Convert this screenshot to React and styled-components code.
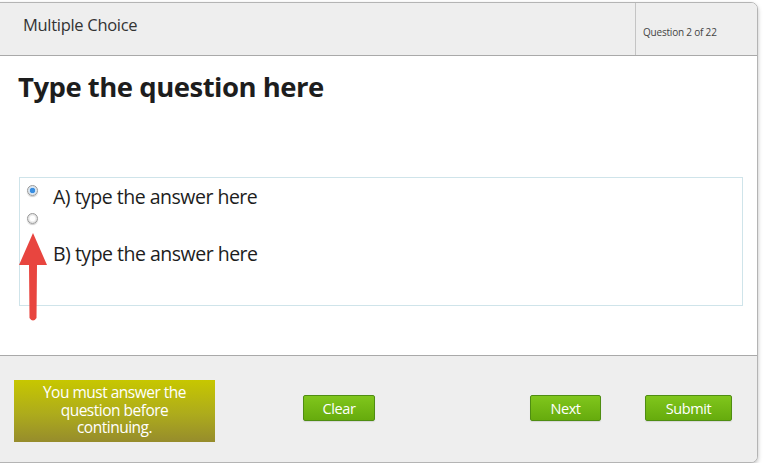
import React from 'react';
import styled, { createGlobalStyle } from 'styled-components';

const GlobalStyle = createGlobalStyle`
	*, *::before, *::after {
		box-sizing: border-box;
	}
	html, body {
		margin: 0;
		padding: 0;
		background: #ffffff;
	}
	body {
		padding-top: 2px;
		font-family: 'Open Sans', 'Liberation Sans', sans-serif;
	}
`;

const Card = styled.div`
	width: 760px;
	height: 461px;
	margin-left: -2px;
	display: flex;
	flex-direction: column;
	border: 1px solid #b4b4b4;
	border-radius: 0 7px 7px 0;
	box-shadow: 0 2px 4px rgba(0, 0, 0, 0.25);
	overflow: hidden;
	background: #fff;
`;

const Header = styled.div`
	height: 53px;
	flex-shrink: 0;
	display: flex;
	background: #eeeeee;
	border-bottom: 1px solid #a9a9a9;
`;

const HeaderTitle = styled.div`
	flex: 1;
	padding: 10px 0 0 24px;
	font-size: 16.5px;
	color: #333;
	letter-spacing: -0.3px;
`;

const Counter = styled.div`
	width: 122px;
	border-left: 1px solid #c4c4c4;
	padding: 22px 0 0 7px;
	font-size: 10px;
	color: #444;
	letter-spacing: -0.2px;
`;

const Body = styled.div`
	flex: 1;
	padding: 12px 14px 0 20px;
`;

const Question = styled.h1`
	margin: 0 0 0 -1px;
	font-size: 27.5px;
	font-weight: 700;
	color: #1d1d1d;
	letter-spacing: -0.5px;
	line-height: 38px;
`;

const AnswerBox = styled.div`
	position: relative;
	margin-top: 71px;
	height: 129px;
	border: 1px solid #cfe4ea;
	padding: 5px 0 0 6px;
	display: flex;
	flex-direction: column;
`;

const Radios = styled.div`
	position: absolute;
	left: 7px;
	top: 7px;
	display: flex;
	flex-direction: column;
	gap: 17px;
`;

const Radio = styled.span`
	width: 11px;
	height: 11px;
	border-radius: 50%;
	border: 1px solid #9a9a9a;
	background: ${(p) =>
		p.checked
			? 'radial-gradient(circle, #3a8ee0 0 2.5px, #cfe3f5 3px, #e8e8e8 5px)'
			: 'radial-gradient(circle, #ffffff 0 2.5px, #f0f0f0 3px, #dcdcdc 5px)'};
	box-shadow: 0 1px 1px rgba(0, 0, 0, 0.2);
`;

const Answer = styled.div`
	padding-left: 27px;
	font-size: 19.5px;
	color: #1d1d1d;
	letter-spacing: -0.5px;
	line-height: 27px;
	margin-bottom: ${(p) => p.gap || 0}px;
`;

const Arrow = styled.svg`
	position: absolute;
	left: -2px;
	top: 54px;
`;

const Footer = styled.div`
	height: 107px;
	flex-shrink: 0;
	background: #eeeeee;
	border-top: 1px solid #a9a9a9;
	display: flex;
	align-items: flex-start;
	padding: 24px 0 0 15px;
`;

const Warning = styled.div`
	width: 201px;
	height: 62px;
	background: linear-gradient(#c7c700, #adab1c 55%, #968c2c);
	color: #fff;
	text-align: center;
	font-size: 15.5px;
	line-height: 17.5px;
	letter-spacing: -0.5px;
	padding-top: 4px;
`;

const GreenButton = styled.button`
	width: ${(p) => p.w}px;
	height: 26px;
	margin-top: 15px;
	margin-left: ${(p) => p.ml}px;
	border: 1px solid #4f8d12;
	border-radius: 2px;
	background: linear-gradient(#80c61c, #66ab0d);
	color: #fff;
	font-family: 'Open Sans', 'Liberation Sans', sans-serif;
	font-size: 14.5px;
	letter-spacing: -0.4px;
	padding: 0;
	box-shadow: 0 1px 1px rgba(0, 0, 0, 0.1);
`;

const App = () => (
	<>
		<GlobalStyle />
		<Card>
			<Header>
				<HeaderTitle>Multiple Choice</HeaderTitle>
				<Counter>Question 2 of 22</Counter>
			</Header>
			<Body>
				<Question>Type the question here</Question>
				<AnswerBox>
					<Radios>
						<Radio checked />
						<Radio />
					</Radios>
					<Answer gap={30}>A) type the answer here</Answer>
					<Answer>B) type the answer here</Answer>
					<Arrow width="30" height="92" viewBox="0 0 30 92">
						<path d="M15 1 L29 33 L19 33 L18.5 86 Q15 91 11.5 86 L11 33 L1 33 Z" fill="#e8453f" />
					</Arrow>
				</AnswerBox>
			</Body>
			<Footer>
				<Warning>
					You must answer the
					<br />
					question before
					<br />
					continuing.
				</Warning>
				<GreenButton w={72} ml={88}>Clear</GreenButton>
				<GreenButton w={71} ml={155}>Next</GreenButton>
				<GreenButton w={87} ml={44}>Submit</GreenButton>
			</Footer>
		</Card>
	</>
);

export default App;
